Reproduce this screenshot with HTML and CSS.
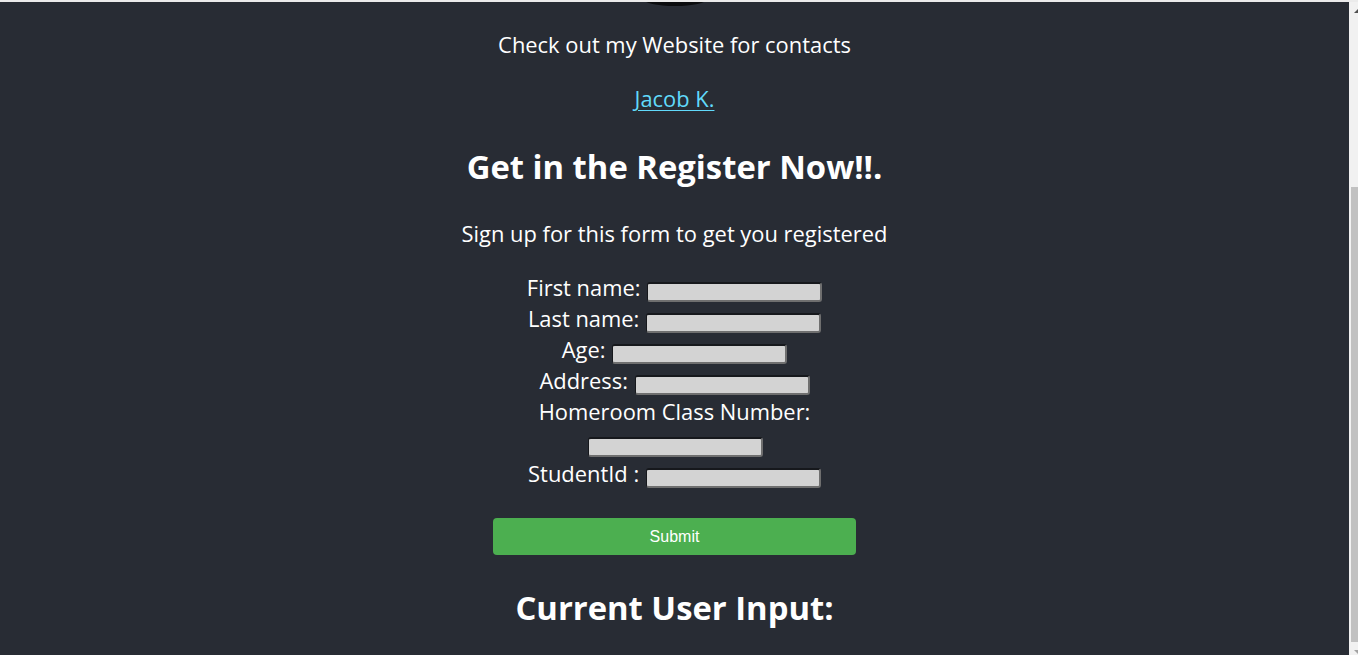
FILE: index.html
```html
<!DOCTYPE html>
<html lang="en">
<head>
<meta charset="utf-8">
<title>Register</title>
<link rel="stylesheet" href="styles.css">
</head>
<body>
<div class="window">
  <main class="app">
    <div class="logo-clip"><div class="logo"></div></div>
    <p class="text">Check out my Website for contacts</p>
    <a class="link" href="#">Jacob K.</a>
    <h2 class="title">Get in the Register Now!!.</h2>
    <p class="text">Sign up for this form to get you registered</p>
    <form class="form">
      <label class="field">First name: <input class="input" type="text"></label><br>
      <label class="field">Last name: <input class="input" type="text"></label><br>
      <label class="field">Age: <input class="input" type="text"></label><br>
      <label class="field">Address: <input class="input" type="text"></label><br>
      <label class="field">Homeroom Class Number: <input class="input" type="text"></label><br>
      <label class="field">StudentId : <input class="input" type="text"></label><br>
      <button class="submit" type="button">Submit</button>
    </form>
    <h2 class="title current">Current User Input:</h2>
  </main>
  <aside class="scrollbar">
    <div class="arrow-up"></div>
    <div class="thumb"></div>
    <div class="arrow-down-area"><div class="arrow-down"></div></div>
  </aside>
</div>
</body>
</html>
```
FILE: styles.css
```css
html, body {
  margin: 0;
  padding: 0;
  height: 100%;
  overflow: hidden;
}

body {
  border-top: 2px solid #ebebeb;
  box-sizing: border-box;
  background: #282c34;
}

.window {
  display: flex;
  height: 653px;
}

.app {
  flex: 1;
  background: #282c34;
  color: #ffffff;
  text-align: center;
  font-family: "Open Sans", "Noto Sans", sans-serif;
  font-size: 21.9px;
  line-height: 31px;
  overflow: hidden;
}

.logo-clip {
  height: 4px;
  overflow: hidden;
  display: flex;
  justify-content: center;
}

.logo {
  width: 64px;
  height: 14px;
  margin-top: -10px;
  border-radius: 50%;
  background: #0b0c0e;
}

.text {
  margin: 23px 0;
}

.link {
  display: block;
  width: max-content;
  margin: 0 auto;
  color: #61dafb;
  text-decoration: underline;
  text-underline-offset: 3px;
  text-decoration-thickness: 1px;
}

.title {
  font-size: 32.8px;
  line-height: 46px;
  font-weight: 700;
  margin: 30px 0 28px;
}

.current {
  margin-top: 30px;
}

.form {
  width: 363px;
  margin: 0 auto;
}

.input {
  box-sizing: border-box;
  width: 175px;
  height: 20px;
  margin: 0 0 0 1px;
  padding: 1px 2px;
  font-size: 13.33px;
  background: #d3d3d3;
  border-style: solid;
  border-width: 2px 2px 2px 1px;
  border-color: #16181c #6f6f6f #6f6f6f #16181c;
  border-radius: 3px;
}

.submit {
  display: block;
  width: 100%;
  height: 37px;
  margin-top: 29px;
  border: 0;
  border-radius: 4px;
  background: #4caf50;
  color: #ffffff;
  font-family: "Liberation Sans", Arial, sans-serif;
  font-size: 16px;
}

.scrollbar {
  width: 9px;
  background: #f1f1f1;
  display: flex;
  flex-direction: column;
  overflow: hidden;
}

.arrow-up {
  width: 0;
  height: 0;
  margin: 7px 0 0 5px;
  border-left: 4px solid transparent;
  border-right: 4px solid transparent;
  border-bottom: 4px solid #505050;
}

.thumb {
  margin: 174px 0 0 2px;
  width: 7px;
  height: 455px;
  background: #c1c1c1;
}

.arrow-down-area {
  flex: 1;
  display: flex;
  align-items: flex-end;
}

.arrow-down {
  width: 0;
  height: 0;
  margin: 0 0 1px 5px;
  border-left: 4px solid transparent;
  border-right: 4px solid transparent;
  border-top: 4px solid #a3a3a3;
}
```
